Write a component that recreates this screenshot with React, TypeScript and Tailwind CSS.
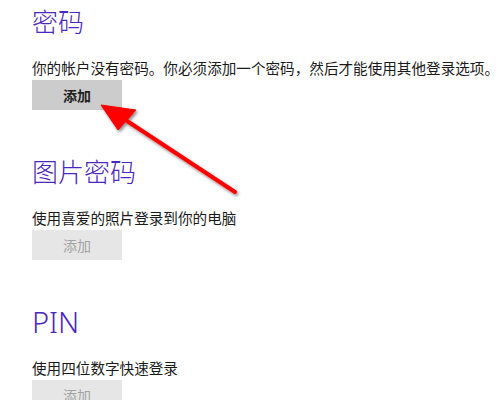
const FONT = { fontFamily: '"Noto Sans", "Noto Sans CJK SC", sans-serif' };

type Option = { title: string; desc: string; enabled?: boolean; latin?: boolean };

const OPTIONS: Option[] = [
  { title: "密码", desc: "你的帐户没有密码。你必须添加一个密码，然后才能使用其他登录选项。", enabled: true },
  { title: "图片密码", desc: "使用喜爱的照片登录到你的电脑" },
  { title: "PIN", desc: "使用四位数字快速登录", latin: true },
];

function Section({ opt, first }: { opt: Option; first?: boolean }) {
  return (
    <section className={first ? "pt-[5px]" : "mt-[45px]"}>
      <h2
        className={`font-light leading-[34px] text-[#4b27c2] ${opt.latin ? "text-[29px]" : "text-[26px]"}`}
      >
        {opt.title}
      </h2>
      <p className="mt-[19px] text-[14.6px] leading-[20px] text-[#1a1a1a] whitespace-nowrap">{opt.desc}</p>
      <button
        className={`mt-[2px] flex h-[30px] w-[90px] items-center justify-center text-[14px] ${
          opt.enabled ? "bg-[#cccccc] font-bold text-[#1f1f1f]" : "bg-[#e6e6e6] text-[#a3a3a3]"
        }`}
      >
        添加
      </button>
    </section>
  );
}

export default function App() {
  return (
    <div className="relative h-[400px] w-[500px] overflow-hidden bg-white pl-[32px]" style={FONT}>
      {OPTIONS.map((o, i) => (
        <Section key={o.title} opt={o} first={i === 0} />
      ))}

      {/* red annotation arrow */}
      <svg className="pointer-events-none absolute left-0 top-0" width="500" height="400">
        <defs>
          <filter id="sh" x="-20%" y="-20%" width="140%" height="140%">
            <feDropShadow dx="1.5" dy="2" stdDeviation="1.5" floodColor="#000" floodOpacity="0.45" />
          </filter>
        </defs>
        <g filter="url(#sh)" fill="#ff0000" stroke="#ff0000">
          <line x1="235" y1="192" x2="118" y2="115" strokeWidth="4" strokeLinecap="round" />
          <polygon points="101,105 136,110 118,130" strokeWidth="1" strokeLinejoin="round" />
        </g>
      </svg>
    </div>
  );
}
